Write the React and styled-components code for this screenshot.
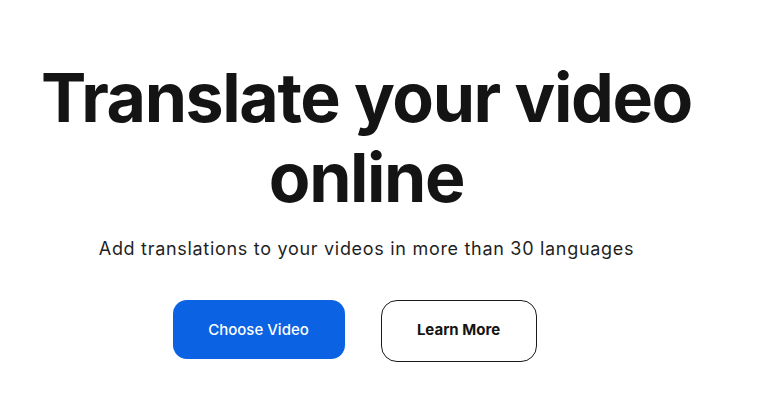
import React from "react";
import styled, { createGlobalStyle } from "styled-components";

const Global = createGlobalStyle`
  html, body { margin: 0; padding: 0; background: #ffffff; }
  body { font-family: Inter, "Noto Sans", sans-serif; -webkit-font-smoothing: antialiased; }
`;

const Hero = styled.section`
  width: 761px;
  height: 419px;
  box-sizing: border-box;
  padding-top: 57px;
  display: flex;
  flex-direction: column;
  align-items: center;
`;

const Title = styled.h1`
  margin: 0;
  width: 680px;
  margin-left: -28px;
  text-align: center;
  font-family: Inter, sans-serif;
  font-weight: 700;
  font-size: 68px;
  line-height: 80px;
  letter-spacing: -1.4px;
  color: #141414;
`;

const Subtitle = styled.p`
  margin: 19px 0 0 -28px;
  font-family: Inter, sans-serif;
  font-size: 18px;
  font-weight: 400;
  line-height: 26px;
  letter-spacing: 0.7px;
  color: #1f1f1f;
`;

const Actions = styled.div`
  margin-top: 38px;
  margin-left: -52px;
  display: flex;
  align-items: flex-start;
  gap: 36px;
`;

const Button = styled.button`
  box-sizing: border-box;
  display: flex;
  align-items: center;
  justify-content: center;
  font-family: Inter, sans-serif;
  font-size: 15px;
  cursor: pointer;
  width: ${(p) => (p.$primary ? "172px" : "156px")};
  height: ${(p) => (p.$primary ? "59px" : "62px")};
  border-radius: ${(p) => (p.$primary ? "14px" : "16px")};
  background: ${(p) => (p.$primary ? "#0b63e3" : "#ffffff")};
  color: ${(p) => (p.$primary ? "#ffffff" : "#141414")};
  border: ${(p) => (p.$primary ? "none" : "1px solid #1a1a1a")};
  font-weight: ${(p) => (p.$primary ? 500 : 650)};
  padding: ${(p) => (p.$primary ? "0" : "0 0 3px")};
`;

export default function App() {
  return (
    <>
      <Global />
      <Hero>
        <Title>Translate your video online</Title>
        <Subtitle>Add translations to your videos in more than 30 languages</Subtitle>
        <Actions>
          <Button $primary>Choose Video</Button>
          <Button>Learn More</Button>
        </Actions>
      </Hero>
    </>
  );
}
